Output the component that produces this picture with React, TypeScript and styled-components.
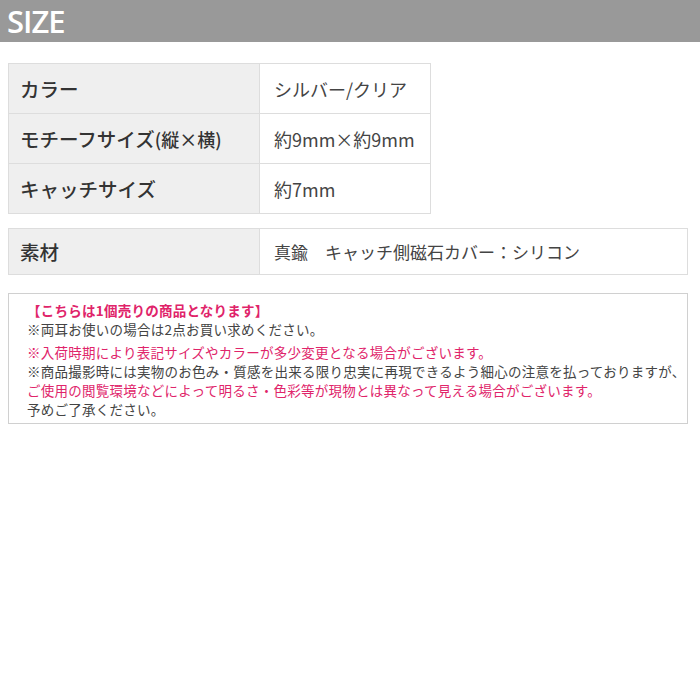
import React from "react";
import styled, { createGlobalStyle } from "styled-components";

const GlobalStyle = createGlobalStyle`
  html, body { margin: 0; padding: 0; background: #fff; }
  body { font-family: "Noto Sans CJK JP", "Noto Sans", sans-serif; }
`;

const Page = styled.div`
  width: 700px;
  display: flex;
  flex-direction: column;
`;

const Header = styled.div`
  height: 42px;
  background: #999999;
  display: flex;
  align-items: center;
  padding-left: 7px;
  box-sizing: border-box;
`;

const HeaderTitle = styled.h1`
  margin: 0;
  font-family: "Open Sans", "Noto Sans", sans-serif;
  font-weight: 600;
  font-size: 31px;
  line-height: 1;
  color: #fff;
  letter-spacing: -1px;
`;

const Content = styled.div`
  padding: 0 8px;
  display: flex;
  flex-direction: column;
`;

const SpecTable = styled.table<{ $width: number; $mt: number }>`
  width: ${(p) => p.$width}px;
  margin-top: ${(p) => p.$mt}px;
  border-collapse: collapse;
  table-layout: fixed;
`;

const LabelCell = styled.th<{ $h: number }>`
  width: 251px;
  height: ${(p) => p.$h}px;
  box-sizing: border-box;
  background: #efefef;
  border: 1px solid #dddddd;
  text-align: left;
  padding: 0 0 0 11px;
  font-size: 19.5px;
  font-weight: 500;
  color: #333;
`;

const LabelNote = styled.span`
  font-size: 18px;
`;

const ValueCell = styled.td<{ $size: number }>`
  border: 1px solid #dddddd;
  background: #fff;
  padding: 0 0 0 14px;
  font-size: ${(p) => p.$size}px;
  color: #444;
`;

const NoteBox = styled.div`
  margin-top: 18px;
  width: 680px;
  box-sizing: border-box;
  border: 1px solid #d0d0d0;
  padding: 7px 0 4px 18px;
  display: flex;
  flex-direction: column;
  gap: 4px;
`;

const NoteBlock = styled.div`
  display: flex;
  flex-direction: column;
`;

const NoteLine = styled.div<{ $red?: boolean; $bold?: boolean }>`
  font-size: 13.5px;
  line-height: 19px;
  letter-spacing: 0.25px;
  color: ${(p) => (p.$red ? "#e0246a" : "#444")};
  font-weight: ${(p) => (p.$bold ? 700 : 400)};
  white-space: nowrap;
`;

const mainRows: { label: React.ReactNode; value: string }[] = [
  { label: "カラー", value: "シルバー/クリア" },
  {
    label: (
      <>
        モチーフサイズ<LabelNote>(縦×横)</LabelNote>
      </>
    ),
    value: "約9mm×約9mm",
  },
  { label: "キャッチサイズ", value: "約7mm" },
];

export default function App() {
  return (
    <Page>
      <GlobalStyle />
      <Header>
        <HeaderTitle>SIZE</HeaderTitle>
      </Header>
      <Content>
        <SpecTable $width={423} $mt={21}>
          <tbody>
            {mainRows.map((r, i) => (
              <tr key={i}>
                <LabelCell $h={50}>{r.label}</LabelCell>
                <ValueCell $size={18}>{r.value}</ValueCell>
              </tr>
            ))}
          </tbody>
        </SpecTable>
        <SpecTable $width={680} $mt={14}>
          <tbody>
            <tr>
              <LabelCell $h={46}>素材</LabelCell>
              <ValueCell $size={17}>真鍮　キャッチ側磁石カバー：シリコン</ValueCell>
            </tr>
          </tbody>
        </SpecTable>
        <NoteBox>
          <NoteBlock>
            <NoteLine $red $bold>【こちらは1個売りの商品となります】</NoteLine>
            <NoteLine>※両耳お使いの場合は2点お買い求めください。</NoteLine>
          </NoteBlock>
          <NoteBlock>
            <NoteLine $red>※入荷時期により表記サイズやカラーが多少変更となる場合がございます。</NoteLine>
            <NoteLine>※商品撮影時には実物のお色み・質感を出来る限り忠実に再現できるよう細心の注意を払っておりますが、</NoteLine>
            <NoteLine $red>ご使用の閲覧環境などによって明るさ・色彩等が現物とは異なって見える場合がございます。</NoteLine>
            <NoteLine>予めご了承ください。</NoteLine>
          </NoteBlock>
        </NoteBox>
      </Content>
    </Page>
  );
}
